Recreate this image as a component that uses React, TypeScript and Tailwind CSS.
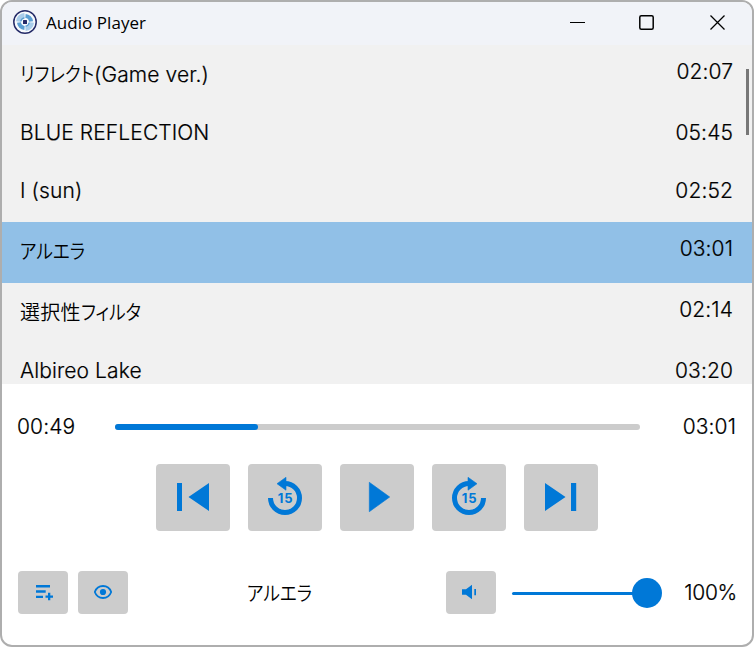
import React from "react";

type Track = { kanji?: string; kana?: string; latin?: string; time: string; active?: boolean };

const tracks: Track[] = [
  { kana: "リフレクト", latin: "(Game ver.)", time: "02:07" },
  { latin: "BLUE REFLECTION", time: "05:45" },
  { latin: "I (sun)", time: "02:52" },
  { kana: "アルエラ", time: "03:01", active: true },
  { kanji: "選択性", kana: "フィルタ", time: "02:14" },
  { latin: "Albireo Lake", time: "03:20" },
];

// Condensed proportional kana, as in UI variants of Japanese gothic faces.
function Kana({ text }: { text: string }) {
  return (
    <span className="inline-block origin-left scale-x-[0.885] text-xl leading-7 tracking-normal [-webkit-text-stroke:0] [font-feature-settings:'palt']">{text}</span>
  );
}

function Logo() {
  return (
    <svg width="24" height="24" viewBox="0 0 24 24" fill="none">
      <circle cx="12" cy="12" r="11.2" fill="#f7fafd" stroke="#252b68" strokeWidth="1.5" />
      <path d="M12.5 6A6 6 0 0 1 18 11.5M11.5 18A6 6 0 0 1 6 12.5" stroke="#5b9fd3" strokeWidth="4" />
      <path d="M5 11.5A7 7 0 0 1 11.5 5M19 12.5A7 7 0 0 1 12.5 19" stroke="#a9cdea" strokeWidth="4" />
      <path d="M7.7 11.5A4.4 4.4 0 0 1 11.5 7.7M16.3 12.5A4.4 4.4 0 0 1 12.5 16.3" stroke="#5b9fd3" strokeWidth="1.6" />
      <rect x="10" y="10" width="4" height="4" rx=".6" fill="#252b68" />
    </svg>
  );
}

function BigButton({ children }: { children: React.ReactNode }) {
  return (
    <button className="h-[67px] w-[74px] rounded bg-[#ccc]">
      <svg width="74" height="67" viewBox="0 0 74 67" fill="#0078d7">{children}</svg>
    </button>
  );
}

function SmallButton({ children }: { children: React.ReactNode }) {
  return (
    <button className="h-[43px] w-[50px] shrink-0 rounded bg-[#ccc]">
      <svg width="50" height="43" viewBox="0 0 50 43" fill="#0078d7">{children}</svg>
    </button>
  );
}

function SeekRing() {
  return (
    <>
      <path d="M22.5 34A14.5 14.5 0 1 0 37 19.5" fill="none" stroke="#0078d7" strokeWidth="5" />
      <path d="M29 19.7L38 13.3V26.2Z" stroke="#0078d7" strokeWidth=".6" strokeLinejoin="round" />
    </>
  );
}

function SeekLabel() {
  return (
    <text x="37.5" y="39" textAnchor="middle" className="font-['Inter',sans-serif] text-[13px] font-bold tracking-[0.8px] [-webkit-text-stroke:0]">15</text>
  );
}

export default function App() {
  return (
    <div className="h-[647px] w-[754px] bg-white font-['Inter','Noto_Sans_CJK_JP',sans-serif] text-[21px] font-[350] tracking-[0.1px] text-black [-webkit-text-stroke:0.2px_#000]">
      <div className="flex h-full flex-col overflow-hidden rounded-[12px] border-2 border-[#aeaeae] bg-white">
        <header className="flex h-[43px] shrink-0 items-start bg-[#f1f3f8] pl-[11px]">
          <div className="pt-2"><Logo /></div>
          <h1 className="ml-[9px] mt-[7px] font-['Open_Sans',sans-serif] text-[17px] font-normal leading-7 tracking-[0.05px] [-webkit-text-stroke:0]">Audio Player</h1>
          <svg className="ml-auto mr-6 mt-2" width="158" height="24" viewBox="0 0 158 24" fill="none" stroke="#000">
            <path d="M0 12.5h15" />
            <rect x="69.8" y="5.8" width="13.4" height="13.4" rx="1.5" strokeWidth="1.5" />
            <path d="M140.5 5.5l14 14m0-14l-14 14" strokeWidth="1.3" />
          </svg>
        </header>

        <main className="relative h-[339px] shrink-0 overflow-hidden bg-[#f1f1f1]">
          {tracks.map((t) => (
            <div
              key={t.time}
              className={`flex items-start justify-between pl-[18px] pr-[19px] ${t.kana ? "h-[61px]" : "h-[58px]"} ${t.active ? "bg-[#91c0e7]" : ""}`}
            >
              <span className={`flex leading-7 ${t.kana ? "mt-4" : "mt-[13px]"}`}>
                {t.kanji && <span className="text-xl leading-7 tracking-[0.3px] [-webkit-text-stroke:0]">{t.kanji}</span>}
                {t.kana && <Kana text={t.kana} />}
                {t.latin && <span className={t.kana ? "-ml-[10px]" : ""}>{t.latin}</span>}
              </span>
              <span className="mt-[13px] leading-7">{t.time}</span>
            </div>
          ))}
          <div className="absolute right-[3px] top-6 h-[66px] w-[3px] bg-[#777]" />
        </main>

        <section className="flex h-[80px] shrink-0 items-start pl-[15px] pr-4 pt-7">
          <span className="mt-px w-[98px] leading-7">00:49</span>
          <div className="mt-3 h-[6px] w-[525px] rounded-full bg-[#ccc]">
            <div className="h-full w-[143px] rounded-full bg-[#0078d7]" />
          </div>
          <span className="ml-auto mt-px leading-7">03:01</span>
        </section>

        <section className="flex h-[107px] shrink-0 items-start justify-center gap-[18px]">
          <BigButton>
            <path d="M21 19h5v28h-5zM53 19v28L32.5 33z" />
          </BigButton>
          <BigButton>
            <SeekRing />
            <SeekLabel />
          </BigButton>
          <BigButton>
            <path d="M29.3 18.3v29.4L49.7 33z" stroke="#0078d7" strokeWidth=".6" strokeLinejoin="round" />
          </BigButton>
          <BigButton>
            <g transform="translate(74 0) scale(-1 1)"><SeekRing /></g>
            <SeekLabel />
          </BigButton>
          <BigButton>
            <path d="M21 19v28L41.5 33zM47 19h5.2v28H47z" />
          </BigButton>
        </section>

        <footer className="flex items-start pl-4 pr-[15px]">
          <SmallButton>
            <path d="M18 14h14v2.4H18zM18 19.3h9.7v2.4H18zM18 24.7h7v2.4h-7zM30 21.8h2.3v2.6H35v2.3h-2.7v2.6H30v-2.6h-2.5v-2.3H30z" />
          </SmallButton>
          <div className="ml-[10px] flex">
            <SmallButton>
              <path d="M16.8 21C18.2 17.2 21.2 15 25 15s6.8 2.2 8.2 6c-1.4 3.8-4.4 6-8.2 6s-6.8-2.2-8.2-6z" fill="none" stroke="#0078d7" strokeWidth="1.8" />
              <circle cx="25" cy="21" r="3.1" />
            </SmallButton>
          </div>
          <span className="ml-[119px] mt-[9px] w-[199px] leading-7"><Kana text="アルエラ" /></span>
          <SmallButton>
            <path d="M16 18.2h4l6-4.4v14.4l-6-4.4h-4zM28.3 18h1.7v6.2h-1.7z" />
          </SmallButton>
          <div className="ml-4 mt-[7px] flex h-[30px] w-[150px] items-center">
            <div className="h-[3px] flex-1 rounded-l-full bg-[#0078d7]" />
            <div className="-ml-px size-[30px] rounded-full bg-[#0078d7]" />
          </div>
          <span className="ml-auto mt-2 leading-7 tracking-[-0.3px]">100%</span>
        </footer>
      </div>
    </div>
  );
}
